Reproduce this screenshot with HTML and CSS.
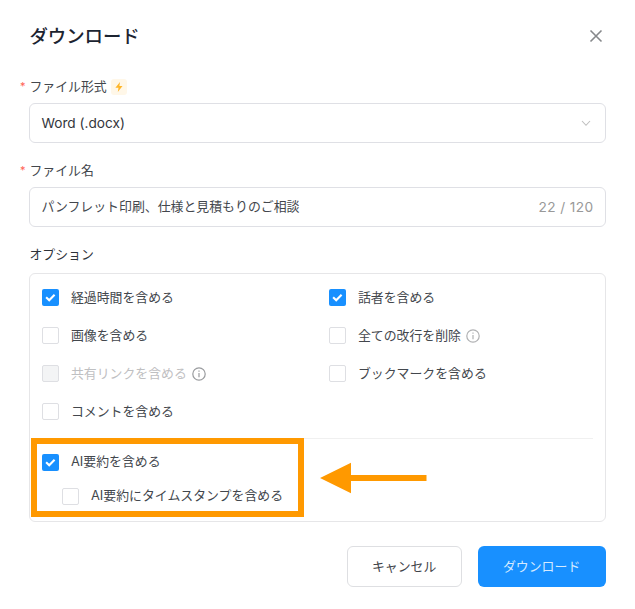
FILE: index.html
```html
<!DOCTYPE html>
<html lang="ja">
<head>
<meta charset="utf-8">
<title>ダウンロード</title>
<link rel="stylesheet" href="styles.css">
</head>
<body>
<main class="dialog">
  <header class="header">
    <h1 class="title">ダウンロード</h1>
    <svg class="close" viewBox="0 0 14 14"><path d="M1.5 1.5l11 11M12.5 1.5l-11 11"/></svg>
  </header>

  <div class="label"><span class="required">*</span>ファイル形式
    <span class="bolt"><svg viewBox="0 0 16 16"><path d="M9 3L4.4 8.8H7.5L6.8 13L11.5 7.1H8.4Z"/></svg></span>
  </div>
  <div class="field">
    <span class="latin">Word (.docx)</span>
    <svg class="chevron" viewBox="0 0 10 7"><path d="M1 1l4 4.3L9 1"/></svg>
  </div>

  <div class="label"><span class="required">*</span>ファイル名</div>
  <div class="field">
    <span>パンフレット印刷、仕様と見積もりのご相談</span>
    <span class="counter">22 / 120</span>
  </div>

  <div class="label options-label">オプション</div>
  <section class="options">
    <div class="grid">
      <div class="option"><span class="box checked"><svg viewBox="0 0 16 16"><path d="M4 7.9l3 3L12.2 5.5"/></svg></span><span>経過時間を含める</span></div>
      <div class="option"><span class="box checked"><svg viewBox="0 0 16 16"><path d="M4 7.9l3 3L12.2 5.5"/></svg></span><span>話者を含める</span></div>
      <div class="option"><span class="box"></span><span>画像を含める</span></div>
      <div class="option"><span class="box"></span><span>全ての改行を削除</span><svg class="info" viewBox="0 0 14 14"><circle cx="7" cy="7" r="6.2"/><path d="M7 6v4.3M7 3.6v1.2"/></svg></div>
      <div class="option disabled"><span class="box"></span><span>共有リンクを含める</span><svg class="info dark" viewBox="0 0 14 14"><circle cx="7" cy="7" r="6.2"/><path d="M7 6v4.3M7 3.6v1.2"/></svg></div>
      <div class="option"><span class="box"></span><span>ブックマークを含める</span></div>
      <div class="option"><span class="box"></span><span>コメントを含める</span></div>
    </div>
    <div class="summary">
      <div class="option"><span class="box checked"><svg viewBox="0 0 16 16"><path d="M4 7.9l3 3L12.2 5.5"/></svg></span><span>AI要約を含める</span></div>
      <div class="option nested"><span class="box"></span><span>AI要約にタイムスタンプを含める</span></div>
      <div class="highlight"></div>
      <svg class="arrow" viewBox="0 0 107 32"><path d="M0 16L31 .7V13H106.5v6H31v12.3Z"/></svg>
    </div>
  </section>

  <footer class="footer">
    <button class="button cancel">キャンセル</button>
    <button class="button primary">ダウンロード</button>
  </footer>
</main>
</body>
</html>
```
FILE: styles.css
```css
* {
  box-sizing: border-box;
}

body {
  margin: 0;
  background: #fff;
  color: #43474d;
  font: 12.9px/20px Inter, "Noto Sans CJK JP", sans-serif;
}

svg {
  display: block;
  fill: none;
}

.dialog {
  width: 635px;
  height: 609px;
  padding: 20px 29.4px 0 29.4px;
}

.header {
  display: flex;
  align-items: center;
  justify-content: space-between;
  height: 32px;
  margin-bottom: 25px;
}

.title {
  margin: 0;
  color: #1c2431;
  font-size: 18.4px;
  font-weight: 500;
}

.close {
  width: 14px;
  height: 14px;
  margin-right: 3px;
  stroke: #86888b;
  stroke-width: 1.6;
}

.label {
  position: relative;
  display: flex;
  align-items: center;
  height: 20px;
  margin-bottom: 6px;
}

.required {
  position: absolute;
  left: -9.5px;
  top: -1px;
  color: #ff6257;
  font-size: 11px;
}

.bolt {
  width: 16px;
  height: 16px;
  margin-left: 4px;
  border-radius: 3px;
  background: #fff7e8;
}

.bolt path {
  fill: #ffb629;
}

.field {
  display: flex;
  align-items: center;
  justify-content: space-between;
  height: 40px;
  margin-bottom: 18px;
  padding: 0 11px;
  border: 1px solid #dfe0e5;
  border-radius: 6px;
}

.latin {
  color: #33363b;
  font-size: 13.7px;
}

.chevron {
  width: 10px;
  height: 7px;
  margin-right: 2.5px;
  stroke: #bfbfbf;
  stroke-width: 1.1;
}

.counter {
  color: #999;
  font-size: 13.7px;
  letter-spacing: 0.4px;
}

.options-label {
  margin-bottom: 8px;
  color: #2e333a;
}

.options {
  height: 249px;
  padding: 4.6px 12px 0;
  border: 1px solid #e6e6e8;
  border-radius: 6px;
}

.grid {
  display: grid;
  grid-template-columns: 287px 1fr;
  grid-auto-rows: 38px;
  height: 160.4px;
  border-bottom: 1px solid #f0f0f0;
}

.option {
  display: flex;
  align-items: center;
  gap: 12px;
}

.box {
  width: 16.5px;
  height: 16.5px;
  border: 1px solid #dedfe3;
  border-radius: 2px;
}

.checked {
  border: 0;
  background: #1890ff;
}

.checked path {
  stroke: #fff;
  stroke-width: 2;
}

.disabled {
  color: #bfc0c2;
}

.disabled .box {
  background: #f3f4f5;
}

.info {
  width: 14px;
  height: 14px;
  margin-left: -7px;
  stroke: #b0b1b3;
  stroke-width: 1.2;
}

.dark {
  stroke: #999b9e;
}

.summary {
  position: relative;
  padding-top: 6.5px;
}

.summary .option {
  height: 34px;
}

.nested {
  padding-left: 20px;
}

.highlight {
  position: absolute;
  left: -11.5px;
  top: -1px;
  width: 273px;
  height: 79px;
  border: 6px solid #f90;
}

.arrow {
  position: absolute;
  left: 278px;
  top: 23px;
  width: 107px;
  height: 32px;
  fill: #f90;
}

.footer {
  display: flex;
  justify-content: flex-end;
  gap: 16px;
  margin-top: 24px;
}

.button {
  width: 115px;
  height: 41px;
  padding: 0;
  border: 1px solid #dedfe2;
  border-radius: 6px;
  background: #fff;
  color: #3f4349;
  font: inherit;
}

.primary {
  width: 128px;
  border: 0;
  background: #1890ff;
  color: #d5eaff;
}
```
